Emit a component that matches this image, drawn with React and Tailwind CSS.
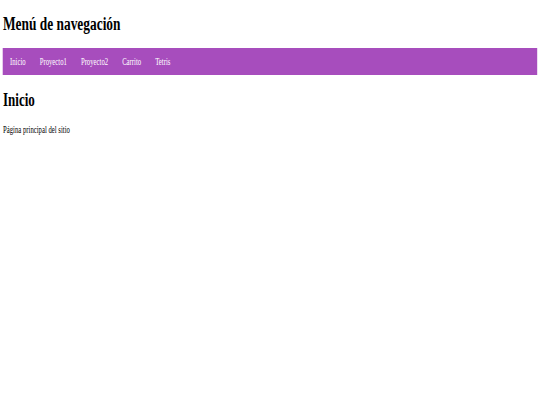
import React from 'react';

const links = ['Inicio', 'Proyecto1', 'Proyecto2', 'Carrito', 'Tetris'];

const App = () => {
  return (
    <div className="min-h-[405px] w-[540px] overflow-hidden bg-white text-black">
      {/* page is drawn wide and squeezed horizontally, like the screenshot */}
      <div
        className="w-[794.1px] origin-top-left scale-x-[0.68] px-[4.4px]"
        style={{ fontFamily: '"Liberation Serif", "Times New Roman", serif' }}
      >
        <h1 className="pt-[12.4px] text-[19.7px] font-bold leading-[22px]">Menú de navegación</h1>

        <nav className="mt-[13.6px] flex h-[27px] items-center bg-[#a74dbd]">
          {links.map((link) => (
            <a key={link} href="#" className="px-[10.3px] text-[9.9px] leading-[11px] text-white">
              {link}
            </a>
          ))}
        </nav>

        <h2 className="mt-[13.8px] text-[19.2px] font-bold leading-[22px]">Inicio</h2>
        <p className="mt-[12.9px] text-[9.9px] leading-[11px]">Página principal del sitio</p>
      </div>
    </div>
  );
};

export default App;
